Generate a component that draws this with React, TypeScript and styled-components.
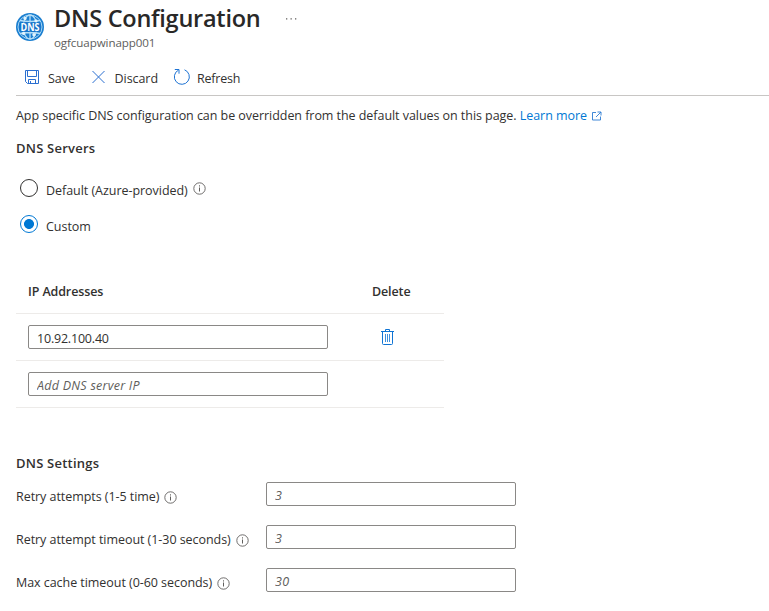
import React, { useState } from 'react';
import styled, { createGlobalStyle } from 'styled-components';

const GlobalStyle = createGlobalStyle`
  * { box-sizing: border-box; }
  body {
    margin: 0;
    overflow: hidden;
    background: #fff;
    color: #323130;
    font: 12.5px/18px "Open Sans", "Noto Sans", sans-serif;
  }
`;

const Page = styled.div`
  display: flex;
  flex-direction: column;
  width: 769px;
  height: 611px;
  padding-left: 16px;
`;

const Header = styled.header`
  display: flex;
  height: 60px;
`;

const HeaderIcon = styled.div`
  width: 38px;
  padding-top: 13px;
  svg { display: block; }
`;

const Title = styled.h1`
  margin: 0;
  width: 231px;
  font-size: 23.5px;
  line-height: 36px;
  font-weight: 600;
  letter-spacing: -0.25px;
  white-space: nowrap;
  color: #292827;
`;

const Subtitle = styled.div`
  margin-top: -1px;
  font-size: 11.6px;
  line-height: 16px;
  letter-spacing: -0.1px;
  color: #605e5c;
`;

const MoreButton = styled.button`
  display: flex;
  align-items: center;
  width: 14px;
  height: 38px;
  padding: 0;
  border: 0;
  background: none;
`;

const Toolbar = styled.nav`
  display: flex;
  height: 36px;
  padding: 0 0 0 9px;
  border-bottom: 1px solid #c8c6c4;
`;

const Command = styled.button<{ $width: number; $track?: number }>`
  display: flex;
  align-items: flex-start;
  width: ${(p) => p.$width}px;
  padding: 8px 0 0;
  border: 0;
  background: none;
  color: #323130;
  font: inherit;
  letter-spacing: ${(p) => p.$track ?? 0}px;
  span { margin-top: 2px; }
`;

const IconSlot = styled.i<{ $width: number }>`
  display: block;
  flex: none;
  width: ${(p) => p.$width}px;
  height: 18px;
  svg { display: block; }
`;

const Description = styled.p`
  display: flex;
  align-items: center;
  margin: 11px 0 0;
  letter-spacing: -0.05px;
  white-space: pre;
`;

const Link = styled.a`
  display: flex;
  align-items: center;
  gap: 5px;
  color: #0078d4;
`;

const SectionTitle = styled.h2<{ $top: number }>`
  margin: ${(p) => p.$top}px 0 0;
  font-size: 13px;
  line-height: 18px;
  font-weight: 600;
  letter-spacing: 0.22px;
`;

const RadioRow = styled.label<{ $top: number }>`
  display: flex;
  align-items: flex-start;
  height: 22px;
  margin: ${(p) => p.$top}px 0 0 4px;
`;

const RadioInput = styled.input<{ $on: boolean }>`
  appearance: none;
  flex: none;
  width: 18px;
  height: 18px;
  margin: 0 8px 0 0;
  border: 1px solid ${(p) => (p.$on ? '#0078d4' : '#323130')};
  border-radius: 50%;
  background: ${(p) => (p.$on ? 'radial-gradient(circle, #0078d4 4.6px, transparent 5.3px)' : '#fff')};
`;

const RadioText = styled.span`
  margin-top: 3px;
  letter-spacing: -0.04px;
`;

const InfoSlot = styled.span<{ $top: number }>`
  margin: ${(p) => p.$top}px 0 0 5px;
  svg { display: block; }
`;

const Table = styled.div`
  width: 428px;
  margin-top: 34px;
`;

const TableRow = styled.div<{ $height: number }>`
  display: grid;
  grid-template-columns: 344px 1fr;
  align-items: center;
  height: ${(p) => p.$height}px;
  padding-left: 12px;
  border-bottom: 1px solid #edebe9;
`;

const ColumnName = styled.div`
  padding-bottom: 1px;
  font-weight: 600;
  letter-spacing: -0.12px;
`;

const TextInput = styled.input<{ $width: number }>`
  width: ${(p) => p.$width}px;
  height: 24px;
  padding: 3px 8px 0;
  border: 1px solid #8a8886;
  border-radius: 2px;
  outline: 0;
  background: #fff;
  color: #323130;
  font: inherit;
  letter-spacing: -0.2px;
  &::placeholder {
    color: #605e5c;
    font-style: italic;
    letter-spacing: 0.25px;
    opacity: 1;
  }
`;

const DeleteButton = styled.button`
  display: block;
  margin-left: 9px;
  padding: 0;
  border: 0;
  background: none;
  svg { display: block; }
`;

const SettingRow = styled.div`
  display: flex;
  align-items: flex-start;
  height: 43px;
`;

const SettingLabel = styled.label`
  display: flex;
  width: 250px;
  padding-top: 6px;
  letter-spacing: -0.05px;
`;

const Settings = styled.div`
  margin-top: 10px;
`;

const DnsIcon = () => (
  <svg width="28" height="28" viewBox="0 0 28 28">
    <circle cx="14" cy="14" r="14" fill="#1b7fd0" />
    <g fill="none" stroke="#b5def7" strokeWidth="1.3">
      <circle cx="14" cy="14" r="12" strokeWidth="0.9" />
      <ellipse cx="14" cy="14" rx="6.8" ry="12" />
      <path d="M14 2v24M3.800 7.500q10.200 2 20.400 0M3.800 20.500q10.200-2 20.400 0" />
    </g>
    <g fill="#e2f4fd">
      <circle cx="9" cy="5.400" r="1.600" />
      <circle cx="20" cy="7.800" r="1.600" />
      <circle cx="7.600" cy="20.400" r="1.600" />
      <circle cx="18" cy="21.800" r="1.700" />
    </g>
    <rect x="3.500" y="9.400" width="21" height="9.400" rx="2" fill="#1673c8" />
    <text x="14" y="17.800" textAnchor="middle" textLength="19" lengthAdjust="spacingAndGlyphs" fill="#fff" fontFamily="Open Sans" fontWeight="700" fontSize="10">DNS</text>
  </svg>
);

const MoreIcon = () => (
  <svg width="14" height="4" viewBox="0 0 14 4" fill="#605e5c">
    <path d="M1 1.300h1.300v1.300H1zM5.500 1.300h1.300v1.300H5.500zM10 1.300h1.300v1.300H10z" />
  </svg>
);

const SaveIcon = () => (
  <svg width="15" height="18" viewBox="0 0 15 18" fill="none" stroke="#2b6fd0">
    <path d="M.5 2.500h13v13h-11l-2-2zM2.500 2.500v6h9v-6M3.500 15.500v-4h7v4M5.500 13v2.500" />
  </svg>
);

const DiscardIcon = () => (
  <svg width="13" height="18" viewBox="0 0 13 18" fill="none" stroke="#2b6fd0">
    <path d="M.5 3l12 12M12.500 3l-12 12" />
  </svg>
);

const RefreshIcon = () => (
  <svg width="18" height="18" viewBox="0 0 18 18" fill="none" stroke="#1f74d4">
    <path d="M11.500 1.800a7.500 7.500 0 1 1-6 .3M1.800 1.500h4.200v4.200" />
  </svg>
);

const ExternalIcon = () => (
  <svg width="10" height="10" viewBox="0 0 10 10" fill="none" stroke="#2b7cd3" strokeWidth="0.9">
    <path d="M4 1.500H.5v7.500h8V5.500M5.500 1h3.500v3.500M9 1l-5 5" />
  </svg>
);

const InfoIcon = () => (
  <svg width="13" height="13" viewBox="0 0 13 13" fill="none" stroke="#605e5c">
    <circle cx="6.500" cy="6.500" r="5.700" strokeWidth="0.9" />
    <path d="M6.500 5.500v4M6.500 3.300v1.200" />
  </svg>
);

const TrashIcon = () => (
  <svg width="13" height="16" viewBox="0 0 13 16" fill="none" stroke="#0f74d4">
    <path d="M0 2.500h13M4.500 2.500v-2h4v2M1.500 2.500v12q0 1 1 1h8q1 0 1-1v-12" />
    <path d="M4.500 5v8M6.500 5v8M8.500 5v8" strokeWidth="0.8" />
  </svg>
);

const settings = [
  { label: 'Retry attempts (1-5 time)', value: '3' },
  { label: 'Retry attempt timeout (1-30 seconds)', value: '3' },
  { label: 'Max cache timeout (0-60 seconds)', value: '30' },
];

export default function App() {
  const [mode, setMode] = useState('custom');
  return (
    <Page>
      <GlobalStyle />
      <Header>
        <HeaderIcon><DnsIcon /></HeaderIcon>
        <div>
          <Title>DNS Configuration</Title>
          <Subtitle>ogfcuapwinapp001</Subtitle>
        </div>
        <MoreButton aria-label="More"><MoreIcon /></MoreButton>
      </Header>
      <Toolbar>
        <Command $width={67}><IconSlot $width={23}><SaveIcon /></IconSlot><span>Save</span></Command>
        <Command $width={81} $track={-0.05}><IconSlot $width={22.5}><DiscardIcon /></IconSlot><span>Discard</span></Command>
        <Command $width={72} $track={-0.22}><IconSlot $width={24}><RefreshIcon /></IconSlot><span>Refresh</span></Command>
      </Toolbar>
      <Description>
        {'App specific DNS configuration can be overridden from the default values on this page. '}
        <Link><span>Learn more</span><ExternalIcon /></Link>
      </Description>
      <SectionTitle $top={14}>DNS Servers</SectionTitle>
      <RadioRow $top={22}>
        <RadioInput type="radio" name="mode" $on={mode === 'default'} checked={mode === 'default'} onChange={() => setMode('default')} />
        <RadioText>Default (Azure-provided)</RadioText>
        <InfoSlot $top={3}><InfoIcon /></InfoSlot>
      </RadioRow>
      <RadioRow $top={14}>
        <RadioInput type="radio" name="mode" $on={mode === 'custom'} checked={mode === 'custom'} onChange={() => setMode('custom')} />
        <RadioText>Custom</RadioText>
      </RadioRow>
      <Table>
        <TableRow $height={43}>
          <ColumnName>IP Addresses</ColumnName>
          <ColumnName>Delete</ColumnName>
        </TableRow>
        <TableRow $height={47}>
          <TextInput $width={300} defaultValue="10.92.100.40" />
          <DeleteButton aria-label="Delete"><TrashIcon /></DeleteButton>
        </TableRow>
        <TableRow $height={47}>
          <TextInput $width={300} placeholder="Add DNS server IP" />
        </TableRow>
      </Table>
      <SectionTitle $top={46}>DNS Settings</SectionTitle>
      <Settings>
        {settings.map((s) => (
          <SettingRow key={s.label}>
            <SettingLabel>{s.label}<InfoSlot $top={3}><InfoIcon /></InfoSlot></SettingLabel>
            <TextInput $width={250} placeholder={s.value} />
          </SettingRow>
        ))}
      </Settings>
    </Page>
  );
}
